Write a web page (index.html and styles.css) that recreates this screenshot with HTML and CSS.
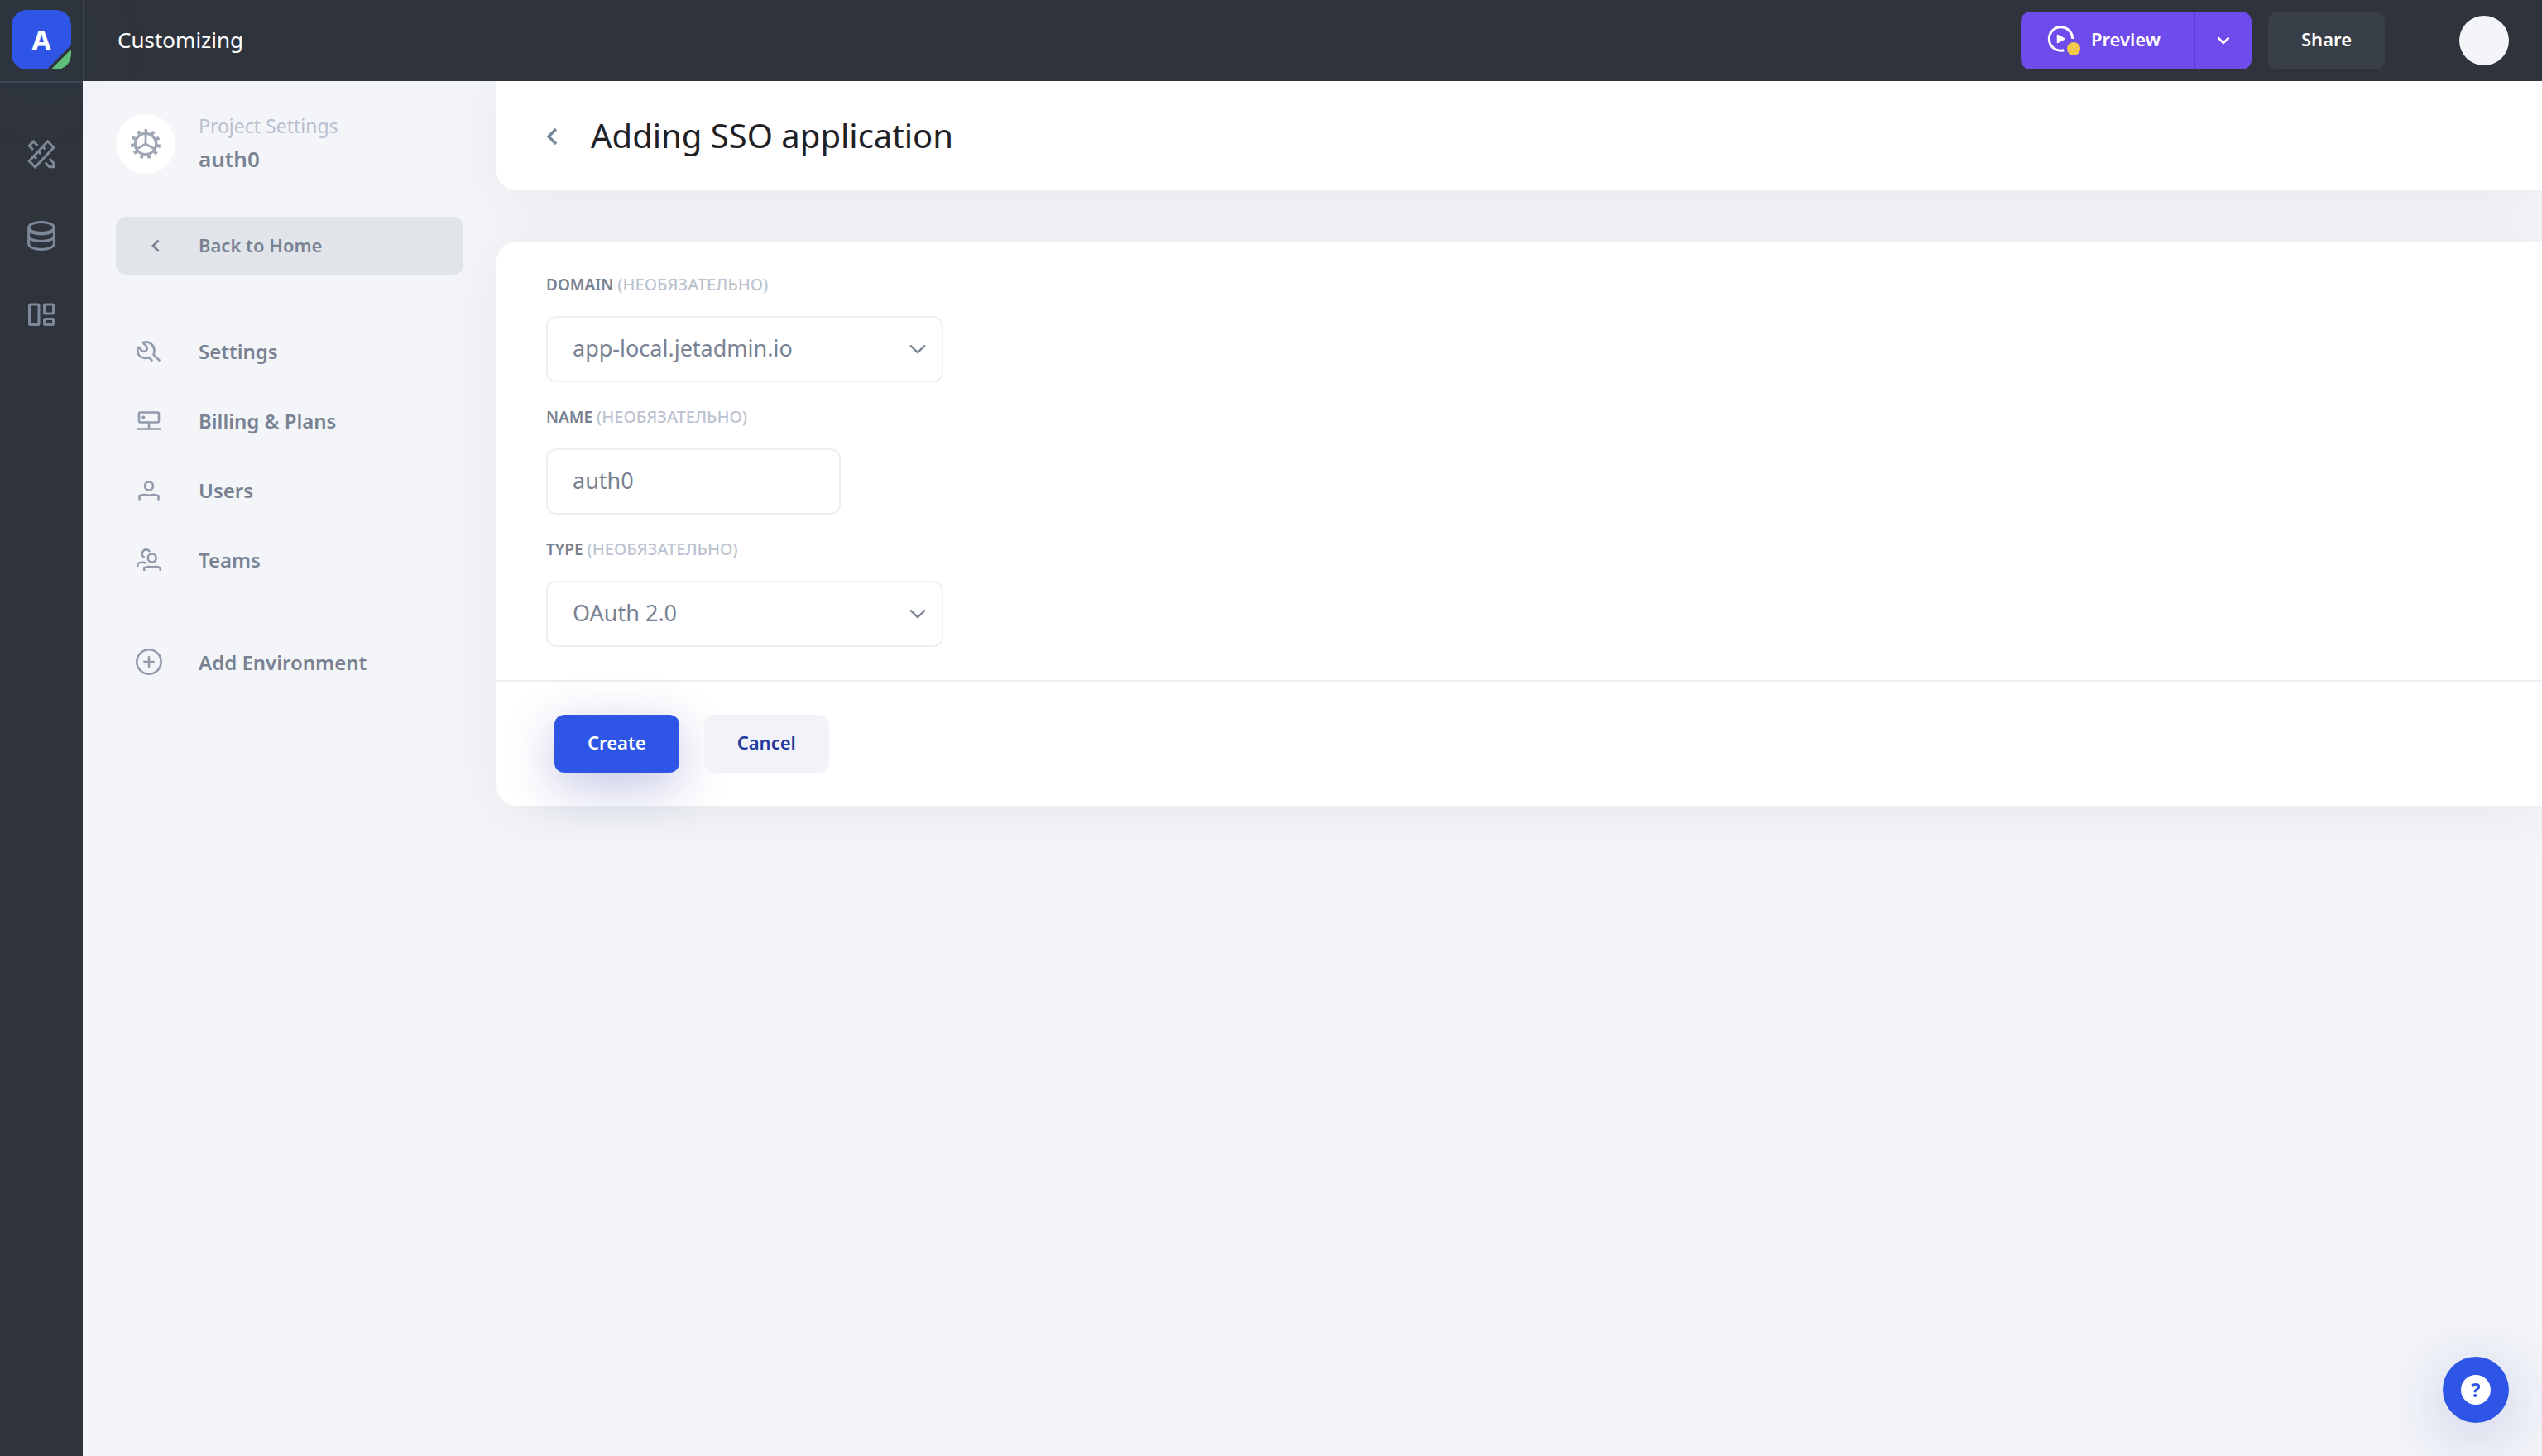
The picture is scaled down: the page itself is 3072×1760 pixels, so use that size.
FILE: index.html
```html
<!DOCTYPE html>
<html lang="en">
<head>
<meta charset="utf-8">
<meta name="viewport" content="width=device-width, initial-scale=1">
<title>Adding SSO application</title>
<link rel="stylesheet" href="styles.css">
</head>
<body>
<div class="app">
  <aside class="rail">
    <a class="rail-logo" href="#" aria-label="App home">
      <svg class="logo-shape" width="72" height="72" viewBox="0 0 72 72" aria-hidden="true">
        <path fill="#2f55e6" d="M18 0H54A18 18 0 0 1 72 18V42.500L42.500 72H18A18 18 0 0 1 0 54V18A18 18 0 0 1 18 0Z"/>
        <path fill="#5fbf78" d="M72 47.500V54A18 18 0 0 1 54 72H47.500Z"/>
      </svg>
      <span class="logo-letter">A</span>
    </a>
    <nav class="rail-nav" aria-label="Sections">
      <a class="rail-link" href="#" aria-label="Design">
        <svg width="60" height="60" viewBox="0 0 60 60" aria-hidden="true">
          <path d="M37.600 10.800 44.900 18.200 22.600 42 15.300 34.700ZM21 28.700 24 31.700M26.200 23 29.200 26M31.500 17.300 34.500 20.300M20 21 15.300 16.300 20.300 11 25.300 16M39.800 32 44.800 37V41.700H39.600L34.800 36.800"/>
        </svg>
      </a>
      <a class="rail-link" href="#" aria-label="Data">
        <svg width="60" height="60" viewBox="0 0 60 60" aria-hidden="true">
          <ellipse cx="30" cy="20" rx="15.300" ry="6.500"/>
          <path d="M14.700 20V39.500C14.700 48.800 45.300 48.800 45.300 39.500V20M14.700 21.500C14.700 30 45.300 30 45.300 21.500M14.700 30.500C14.700 38.500 45.300 38.500 45.300 30.500"/>
        </svg>
      </a>
      <a class="rail-link" href="#" aria-label="Layout">
        <svg width="60" height="60" viewBox="0 0 60 60" aria-hidden="true">
          <rect x="15.500" y="18" width="11.500" height="24.500" rx="1"/>
          <rect x="33.500" y="18" width="11" height="11" rx="1"/>
          <rect x="33.500" y="35.500" width="11" height="7" rx="1"/>
        </svg>
      </a>
    </nav>
  </aside>

  <div class="workspace">
    <header class="topbar">
      <span class="topbar-title">Customizing</span>
      <div class="topbar-actions">
        <div class="split">
          <button class="button split-main" type="button">
            <svg width="45" height="42" viewBox="0 0 45 42" aria-hidden="true">
              <path d="M34.700 21A14.200 14.200 0 1 0 24.200 34.700" fill="none" stroke="#fff" stroke-width="3"/>
              <path d="M16.500 16.500 25 21 16.500 25.500Z" fill="#fff" stroke="#fff" stroke-width="1.500" stroke-linejoin="round"/>
              <circle cx="36" cy="33" r="8" fill="#f2c94c"/>
            </svg>
            Preview
          </button>
          <button class="split-caret" type="button" aria-label="Preview options">
            <svg width="18" height="12" viewBox="0 0 18 12" aria-hidden="true"><path d="M2.500 2.500 9 9 15.500 2.500" fill="none" stroke="#fff" stroke-width="2.600"/></svg>
          </button>
        </div>
        <button class="button share" type="button">Share</button>
        <a class="avatar" href="#" aria-label="Account"></a>
      </div>
    </header>

    <div class="body">
      <aside class="sidebar">
        <div class="project">
          <span class="project-icon">
            <svg width="40" height="40" viewBox="0 0 40 40" fill="none" stroke="#9ea5b3" aria-hidden="true">
              <circle cx="20" cy="20" r="12.700" stroke-width="3.200"/>
              <circle cx="20" cy="20" r="16" stroke-width="4" stroke-dasharray="4 5.139" stroke-dashoffset="2" transform="rotate(-90 20 20)"/>
              <path d="M20 7V20L8.500 26.500M20 20 31.500 26.500" stroke-width="2.800"/>
            </svg>
          </span>
          <div class="project-text">
            <span class="project-kind">Project Settings</span>
            <span class="project-name">auth0</span>
          </div>
        </div>

        <a class="back-home" href="#">
          <svg width="32" height="32" viewBox="0 0 32 32" aria-hidden="true"><path d="M27.500 10.500 21 17 27.500 23.500" fill="none" stroke="#788292" stroke-width="2.700"/></svg>
          Back to Home
        </a>

        <nav class="side-nav" aria-label="Project settings">
          <a class="side-link" href="#">
            <svg class="side-icon" width="32" height="32" viewBox="0 0 32 32" aria-hidden="true"><path d="M29.300 28.300 21.600 20.800C23.300 16 22.500 11.500 19.500 8.500 16.500 5.600 12.500 4.800 9.200 6 8.600 8.300 15 9.500 13.700 14.200 12 18 7.500 17.600 5.600 14 4.800 12.500 3.500 11.300 2.700 12.300 1.700 17.500 3 21.500 6.500 23.500 9.500 25 13 25.200 16 24L20.200 28.300"/></svg>
            Settings
          </a>
          <a class="side-link" href="#">
            <svg class="side-icon" width="32" height="32" viewBox="0 0 32 32" aria-hidden="true"><rect x="4" y="6.500" width="24" height="12" rx="1.500"/><path d="M16 19V26M1 26.500H31"/><circle class="dot" cx="9.300" cy="12.500" r="2"/></svg>
            Billing &amp; Plans
          </a>
          <a class="side-link" href="#">
            <svg class="side-icon" width="32" height="32" viewBox="0 0 32 32" aria-hidden="true"><circle cx="16" cy="11.500" r="5"/><path d="M4.500 28.500V23.300C9 21 12 21.800 16 22.800 20 21.800 23 21 27.500 23.300V28.500"/></svg>
            Users
          </a>
          <a class="side-link" href="#">
            <svg class="side-icon" width="32" height="32" viewBox="0 0 32 32" aria-hidden="true"><circle cx="19.700" cy="14.500" r="5"/><path d="M10.300 30V26.300C14 24 17 25 20 25.500 23 25 26 24 29.700 26.300V30M2.300 25V21.300C5.500 19 9 19.500 13 20.700M17 7A5 5 0 1 0 10.700 14"/></svg>
            Teams
          </a>
        </nav>

        <a class="side-link" href="#">
          <svg class="side-icon" width="32" height="32" viewBox="0 0 32 32" aria-hidden="true"><circle cx="16" cy="16" r="14.700"/><path d="M16 9.300V22.700M9.300 16H22.700"/></svg>
          Add Environment
        </a>
      </aside>

      <main class="main">
        <header class="page-head">
          <a class="page-back" href="#" aria-label="Back">
            <svg width="14" height="24" viewBox="0 0 14 24" aria-hidden="true"><path d="M12 5 3 14 12 23" fill="none" stroke="#788699" stroke-width="3.500"/></svg>
          </a>
          <h1 class="page-title">Adding SSO application</h1>
        </header>

        <form class="card">
          <div class="fields">
            <div class="field">
              <label class="label" for="domain">DOMAIN <span class="optional">(НЕОБЯЗАТЕЛЬНО)</span></label>
              <div class="select-box">
                <select class="control" id="domain"><option>app-local.jetadmin.io</option></select>
                <svg class="chevron" width="20" height="12" viewBox="0 0 20 12" aria-hidden="true"><path d="M1 1.500 10 10 19 1.500"/></svg>
              </div>
            </div>
            <div class="field">
              <label class="label" for="name">NAME <span class="optional">(НЕОБЯЗАТЕЛЬНО)</span></label>
              <input class="control control-short" id="name" type="text" value="auth0">
            </div>
            <div class="field">
              <label class="label" for="type">TYPE <span class="optional">(НЕОБЯЗАТЕЛЬНО)</span></label>
              <div class="select-box">
                <select class="control" id="type"><option>OAuth 2.0</option></select>
                <svg class="chevron" width="20" height="12" viewBox="0 0 20 12" aria-hidden="true"><path d="M1 1.500 10 10 19 1.500"/></svg>
              </div>
            </div>
          </div>
          <footer class="card-actions">
            <button class="button create" type="submit">Create</button>
            <button class="button cancel" type="button">Cancel</button>
          </footer>
        </form>
      </main>
    </div>
  </div>
</div>

<button class="help" type="button" aria-label="Help"><span class="help-mark">?</span></button>
</body>
</html>
```
FILE: styles.css
```css
* {
  box-sizing: border-box;
}

body {
  margin: 0;
  background: #f3f5f9;
  color: #788292;
  font-family: "Noto Sans", sans-serif;
  font-size: 24px;
}

a {
  color: inherit;
  text-decoration: none;
}

button,
input,
select {
  margin: 0;
  border: 0;
  font: inherit;
}

svg {
  display: block;
  flex: none;
}

.app {
  display: flex;
  min-height: 100vh;
}

/* Left icon rail */
.rail {
  position: relative;
  z-index: 2;
  flex: none;
  width: 100px;
  background: #2f343c;
}

.rail-logo {
  position: relative;
  display: flex;
  align-items: center;
  justify-content: center;
  height: 100px;
  padding-bottom: 2px;
  border-bottom: 2px solid #404650;
}

.logo-shape {
  border-radius: 18px;
  box-shadow: 0 8px 120px rgba(47, 85, 230, 0.1);
}

.logo-letter {
  position: absolute;
  color: #fff;
  font-size: 34px;
  font-weight: 700;
  line-height: 48px;
}

.rail-nav {
  display: flex;
  flex-direction: column;
  align-items: center;
  gap: 35px;
  padding-top: 60px;
}

.rail-link svg {
  fill: none;
  stroke: #7d8898;
  stroke-width: 3;
}

/* Top bar */
.workspace {
  display: flex;
  flex: 1;
  flex-direction: column;
  min-width: 0;
}

.topbar {
  position: relative;
  z-index: 1;
  display: flex;
  align-items: center;
  justify-content: space-between;
  height: 98px;
  padding: 0 40px;
  border-left: 2px solid #404650;
  background: #2f343c;
  color: #fff;
}

.topbar-title {
  padding-bottom: 2px;
  font-size: 26px;
}

.topbar-actions {
  display: flex;
  align-items: center;
}

.button {
  display: flex;
  align-items: center;
  justify-content: center;
  height: 70px;
  padding: 0 40px 4px;
  border-radius: 12px;
  font-size: 22px;
  font-weight: 600;
}

.split {
  display: flex;
  overflow: hidden;
  border-radius: 12px;
}

.split-main {
  gap: 12px;
  padding-left: 28px;
  border-radius: 0;
  background: #6f4beb;
  color: #fff;
}

.split-caret {
  display: flex;
  align-items: center;
  justify-content: center;
  width: 70px;
  border-left: 2px solid #5d36e2;
  background: #6f4beb;
}

.share {
  margin-left: 20px;
  background: #393f49;
  color: #fff;
}

.avatar {
  width: 60px;
  height: 60px;
  margin-left: 90px;
  border-radius: 50%;
  background: #f3f5f9;
}

/* Project sidebar */
.body {
  display: flex;
  flex: 1;
}

.sidebar {
  flex: none;
  width: 500px;
  padding: 40px;
}

.project {
  display: flex;
  align-items: center;
  gap: 28px;
  height: 72px;
}

.project-icon {
  display: flex;
  align-items: center;
  justify-content: center;
  width: 72px;
  height: 72px;
  border-radius: 50%;
  background: #fff;
}

.project-text {
  display: flex;
  flex-direction: column;
  padding-bottom: 4px;
  line-height: 40px;
}

.project-kind {
  color: #b9c0ce;
  font-size: 23px;
}

.project-name {
  font-size: 26px;
  font-weight: 600;
}

.back-home {
  display: flex;
  align-items: center;
  gap: 44px;
  height: 70px;
  margin-top: 52px;
  padding: 0 24px 2px;
  border-radius: 12px;
  background: #e1e4e8;
  font-size: 22px;
  font-weight: 600;
}

.side-nav {
  margin: 50px 0 40px;
}

.side-link {
  display: flex;
  align-items: center;
  gap: 44px;
  height: 84px;
  padding: 0 24px;
  font-size: 24px;
  font-weight: 600;
}

.side-icon {
  fill: none;
  stroke: #929bab;
  stroke-width: 2.6;
}

.side-icon .dot {
  fill: #929bab;
  stroke: none;
}

/* Page content */
.main {
  flex: 1;
  min-width: 0;
}

.page-head,
.card {
  background: #fff;
  box-shadow: 0 8px 80px rgba(20, 20, 40, 0.06);
}

.page-head {
  display: flex;
  align-items: center;
  gap: 40px;
  height: 132px;
  padding: 0 60px 2px;
  border-radius: 0 0 0 24px;
}

.page-title {
  margin: 0;
  color: #1f2125;
  font-size: 40px;
  font-weight: 400;
}

.card {
  margin-top: 62px;
  border-radius: 24px 0 0 24px;
}

.fields {
  display: flex;
  flex-direction: column;
  gap: 24px;
  padding: 34px 60px 40px;
}

.field {
  display: flex;
  flex-direction: column;
  align-items: flex-start;
  gap: 20px;
}

.label {
  font-size: 19px;
  font-weight: 600;
  line-height: 36px;
}

.optional {
  color: #bcc3d0;
  font-size: 20px;
  font-weight: 500;
}

.select-box {
  position: relative;
  width: 480px;
}

.control {
  display: block;
  width: 100%;
  height: 80px;
  padding: 0 30px 4px;
  border: 2px solid #eeeef4;
  border-radius: 12px;
  background: #fff;
  color: #788292;
  font-size: 27px;
  appearance: none;
}

.control-short {
  width: 356px;
}

.chevron {
  position: absolute;
  top: 34px;
  right: 21px;
  fill: none;
  pointer-events: none;
  stroke: #788292;
  stroke-width: 2.4;
}

.card-actions {
  display: flex;
  gap: 30px;
  padding: 40px 70px;
  border-top: 2px solid #ebeef2;
}

.create {
  background: #2f55e6;
  box-shadow: 0 16px 60px rgba(30, 40, 150, 0.28);
  color: #fff;
}

.cancel {
  background: #f2f3f9;
  color: #223aa0;
}

/* Floating help */
.help {
  position: fixed;
  right: 40px;
  bottom: 40px;
  display: flex;
  align-items: center;
  justify-content: center;
  width: 80px;
  height: 80px;
  border-radius: 50%;
  background: #2f55e6;
  box-shadow: 0 16px 80px rgba(30, 40, 150, 0.24);
}

.help-mark {
  width: 36px;
  height: 36px;
  border-radius: 50%;
  background: #fff;
  color: #2f55e6;
  font-size: 24px;
  font-weight: 700;
  line-height: 36px;
}
```
